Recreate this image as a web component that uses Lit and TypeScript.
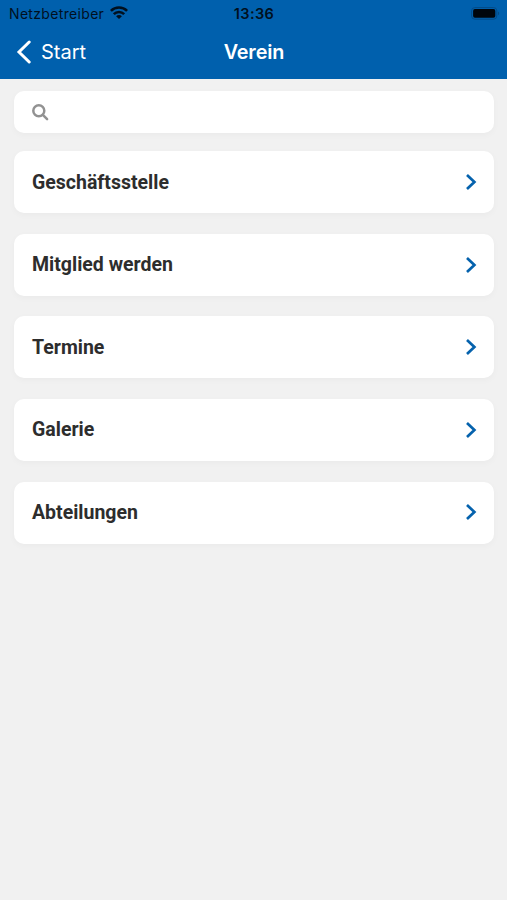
import { LitElement, html, css } from "lit";
import { customElement, property } from "lit/decorators.js";

@customElement("status-bar")
class StatusBar extends LitElement {
  static styles = css`
    :host { display: grid; grid-template-columns: 1fr auto 1fr; align-items: center; height: 27px; color: #00101f; font-family: Inter, sans-serif; font-size: 14px; }
    .carrier { display: flex; align-items: center; gap: 6px; padding-left: 9px; letter-spacing: 0.33px; }
    .wifi { width: 18px; height: 13px; margin-top: -2px; }
    .time { font-weight: 600; font-size: 14.5px; letter-spacing: 0.4px; padding-left: 1px; }
    .battery { justify-self: end; width: 29px; height: 13px; margin-right: 7px; margin-top: -1px; }
  `;
  render() {
    return html`
      <div class="carrier"><span>Netzbetreiber</span>
        <svg class="wifi" viewBox="0 0 18 13" fill="none" stroke="#00101f" stroke-width="2.6">
          <path d="M.9 4.9a11.5 11.5 0 0 1 16.2 0" />
          <path d="M3.8 8.2a7.4 7.4 0 0 1 10.4 0" />
          <path d="M9 13 6.1 10.3a4 4 0 0 1 5.8 0Z" fill="#00101f" stroke="none" />
        </svg>
      </div>
      <div class="time">13:36</div>
      <svg class="battery" viewBox="0 0 29 13">
        <rect x=".6" y=".6" width="25.2" height="11.6" rx="3.2" fill="none" stroke="#034b87" />
        <rect x="2.1" y="2.1" width="22.2" height="8.6" rx="1.8" fill="#00060d" />
        <path d="M27 4.6c1.6.5 1.6 3.1 0 3.6Z" fill="#034b87" />
      </svg>
    `;
  }
}

@customElement("nav-bar")
class NavBar extends LitElement {
  static styles = css`
    :host { display: grid; grid-template-columns: 1fr auto 1fr; align-items: center; height: 52px; padding-bottom: 2px; box-sizing: border-box; color: #fff; font-family: Inter, sans-serif; font-size: 20px; line-height: 50px; }
    .back { display: flex; align-items: center; gap: 9px; padding-left: 16px; }
    .arrow { width: 16px; height: 24px; }
    .title { font-weight: 600; font-size: 19.8px; letter-spacing: -0.1px; padding-left: 1px; }
  `;
  render() {
    return html`
      <div class="back">
        <svg class="arrow" viewBox="0 0 16 24" fill="none" stroke="#fff" stroke-width="3" stroke-linecap="round" stroke-linejoin="miter"><path d="M13.2 2 3 12 13.2 22" /></svg>
        <span>Start</span>
      </div>
      <div class="title">Verein</div>
    `;
  }
}

@customElement("menu-card")
class MenuCard extends LitElement {
  @property() label = "";
  static styles = css`
    :host { display: flex; align-items: center; justify-content: space-between; box-sizing: border-box; height: 62px; padding: 0 17px 0 18.5px; border-radius: 10px; background: #fff; box-shadow: 0 2px 7px rgba(0, 0, 0, 0.03); color: #2d2d2d; font: 700 19.5px/24px Roboto, sans-serif; }
    .label { margin-top: 0.5px; }
    .chevron { width: 12px; height: 18px; margin-top: -0.6px; }
  `;
  render() {
    return html`<span class="label">${this.label}</span>
      <svg class="chevron" viewBox="0 0 12 18" fill="none" stroke="#0562ad" stroke-width="2.7"><path d="M2 2 9.4 9 2 16" /></svg>`;
  }
}

@customElement("app-root")
class AppRoot extends LitElement {
  static styles = css`
    :host { display: block; height: 900px; background: #f1f1f1; }
    .header { background: #0060ad; }
    .content { padding: 12px 13px 0 13.5px; }
    .search { display: flex; align-items: center; height: 41.5px; padding-left: 18px; border-radius: 10px; background: #fff; box-shadow: 0 2px 7px rgba(0, 0, 0, 0.03); }
    .glass { width: 17px; height: 17px; margin-top: 2px; }
    .list { display: flex; flex-direction: column; gap: 20.6px; margin-top: 18.8px; }
  `;
  private items = ["Geschäftsstelle", "Mitglied werden", "Termine", "Galerie", "Abteilungen"];
  render() {
    return html`
      <div class="header"><status-bar></status-bar><nav-bar></nav-bar></div>
      <div class="content">
        <div class="search">
          <svg class="glass" viewBox="0 0 17 17" fill="none" stroke="#929292" stroke-width="2.5" stroke-linecap="round"><circle cx="6.8" cy="6.8" r="5.5" /><path d="m11.1 11.1 4 4" /></svg>
        </div>
        <div class="list">${this.items.map((item) => html`<menu-card .label=${item}></menu-card>`)}</div>
      </div>
    `;
  }
}
